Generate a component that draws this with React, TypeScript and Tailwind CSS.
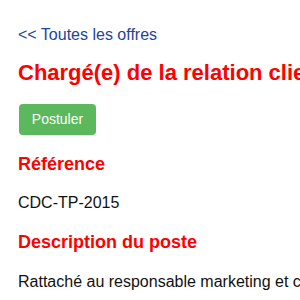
import React from 'react';

// Fiche d'une offre d'emploi
const App: React.FC = () => {
  return (
    <div className="w-[300px] h-[300px] overflow-hidden bg-white font-['Liberation_Sans',Arial,sans-serif]">
      <div className="pl-[18px] pt-[25px] whitespace-nowrap">
        <a href="#" className="block text-[16px] leading-[20px] text-[#23449a]">
          &lt;&lt; Toutes les offres
        </a>

        <h1 className="mt-[14px] text-[22px] leading-[28px] font-bold text-[#ff0000]">
          Chargé(e) de la relation client
        </h1>

        <button
          type="button"
          className="mt-[17px] ml-px h-[31px] w-[77px] rounded bg-[#5cb85c] text-[14px] text-white"
        >
          Postuler
        </button>

        <h2 className="mt-[17px] text-[18px] leading-[24px] font-bold text-[#ff0000]">Référence</h2>
        <p className="mt-[17px] text-[16px] leading-[20px] text-[#111]">CDC-TP-2015</p>

        <h2 className="mt-[17px] text-[18px] leading-[24px] font-bold text-[#ff0000]">Description du poste</h2>
        <p className="mt-[18px] text-[16px] leading-[20px] text-[#111]">
          Rattaché au responsable marketing et commercial, vous assurez le suivi des clients.
        </p>
      </div>
    </div>
  );
};

export default App;
